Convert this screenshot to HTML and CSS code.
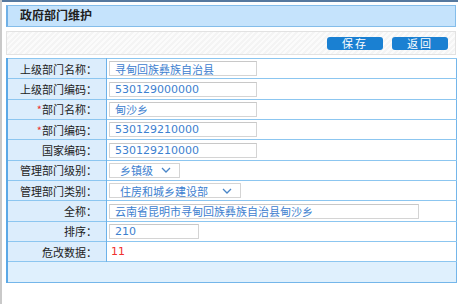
FILE: index.html
```html
<!DOCTYPE html>
<html lang="zh-CN">
<head>
    <meta charset="UTF-8">
    <title>政府部门维护</title>
    <link rel="stylesheet" href="styles.css">
</head>
<body>
    <div class="topbar"></div>
    <div class="page">
        <div class="title">政府部门维护</div>
        <div class="toolbar">
            <button class="btn">保存</button>
            <button class="btn">返回</button>
        </div>
        <table class="form">
            <tr>
                <th>上级部门名称：</th>
                <td><input class="txt" value="寻甸回族彝族自治县"></td>
            </tr>
            <tr>
                <th>上级部门编码：</th>
                <td><input class="txt" value="530129000000"></td>
            </tr>
            <tr>
                <th><span class="req">*</span>部门名称：</th>
                <td><input class="txt" value="甸沙乡"></td>
            </tr>
            <tr>
                <th><span class="req">*</span>部门编码：</th>
                <td><input class="txt" value="530129210000"></td>
            </tr>
            <tr>
                <th>国家编码：</th>
                <td><input class="txt" value="530129210000"></td>
            </tr>
            <tr>
                <th>管理部门级别：</th>
                <td>
                    <div class="sel sel-s"><span>乡镇级</span>
                        <svg width="10" height="6" viewBox="0 0 10 6"><path d="M1 1l4 4 4-4" fill="none" stroke="#4a86c8" stroke-width="1.3"/></svg>
                    </div>
                </td>
            </tr>
            <tr>
                <th>管理部门类别：</th>
                <td>
                    <div class="sel sel-l"><span>住房和城乡建设部</span>
                        <svg width="10" height="6" viewBox="0 0 10 6"><path d="M1 1l4 4 4-4" fill="none" stroke="#4a86c8" stroke-width="1.3"/></svg>
                    </div>
                </td>
            </tr>
            <tr>
                <th>全称：</th>
                <td><input class="txt txt-w" value="云南省昆明市寻甸回族彝族自治县甸沙乡"></td>
            </tr>
            <tr>
                <th>排序：</th>
                <td><input class="txt txt-n" value="210"></td>
            </tr>
            <tr>
                <th>危改数据：</th>
                <td><span class="num">11</span></td>
            </tr>
            <tr class="foot">
                <td colspan="2"></td>
            </tr>
        </table>
    </div>
</body>
</html>
```

FILE: styles.css
```css
body {
    margin: 0;
    font: 11px "DejaVu Sans", "Noto Sans CJK SC", sans-serif;
    color: #222;
    border-left: 2px solid #c9c9c9;
    height: 304px;
    box-sizing: border-box;
}
.topbar {
    height: 2px;
    background: #56799f;
}
.page {
    padding: 3px 2px 0 4px;
}
.title {
    height: 20px;
    line-height: 20px;
    border: 1px solid #84bdea;
    border-left: 2px solid #6fb0e6;
    background: #c5e3fc;
    padding-left: 12px;
    font: bold 12px "Noto Sans CJK SC", sans-serif;
    color: #1e1e1e;
}
.toolbar {
    margin-top: 4px;
    height: 22px;
    border: 1px solid #e2e2e2;
    background: repeating-linear-gradient(135deg, #f4f4f4 0 2px, #fbfbfb 2px 4px);
    display: flex;
    justify-content: flex-end;
    align-items: center;
    gap: 9px;
    padding-right: 7px;
}
.btn {
    width: 56px;
    height: 13px;
    padding: 0;
    border: 0;
    border-radius: 3px;
    background: #1a80d2;
    color: #fff;
    font: 11px "Noto Sans CJK SC", sans-serif;
    line-height: 13px;
    letter-spacing: 2px;
}
.form {
    margin-top: 3px;
    width: 451px;
    border-collapse: collapse;
    border: 1px solid #74b6ea;
    border-left: 2px solid #5aa8e6;
}
.form th, .form td {
    height: 19.35px;
    padding: 0;
    border-top: 1px solid #8cc6f0;
}
.form th {
    width: 89px;
    padding-right: 9px;
    text-align: right;
    font-weight: normal;
    background: #dcedfc;
    border-right: 1px solid #6cb2ea;
    font-family: "Noto Sans CJK SC", sans-serif;
    color: #222;
}
.form td {
    padding-left: 2px;
    background: #fff;
}
.req {
    color: #e33;
}
.txt {
    width: 148px;
    height: 15px;
    box-sizing: border-box;
    border: 1px solid #d4d4d4;
    border-top-color: #c8c8c8;
    padding: 0 0 0 5px;
    font: 11px "DejaVu Sans", "Noto Sans CJK SC", sans-serif;
    color: #3d80cf;
    display: block;
}
.txt-w {
    width: 310px;
}
.txt-n {
    width: 90px;
}
.sel {
    height: 15px;
    box-sizing: border-box;
    border: 1px solid #d4d4d4;
    display: flex;
    align-items: center;
    justify-content: space-between;
    padding: 0 8px 0 10px;
    color: #3d80cf;
    font-family: "Noto Sans CJK SC", sans-serif;
}
.sel-s {
    width: 71px;
}
.sel-l {
    width: 132px;
}
.num {
    color: #f03030;
    padding-left: 2px;
}
.form .foot td {
    height: 20px;
    background: #dff0fd;
    border-top: 1px solid #8cc6f0;
}
```
